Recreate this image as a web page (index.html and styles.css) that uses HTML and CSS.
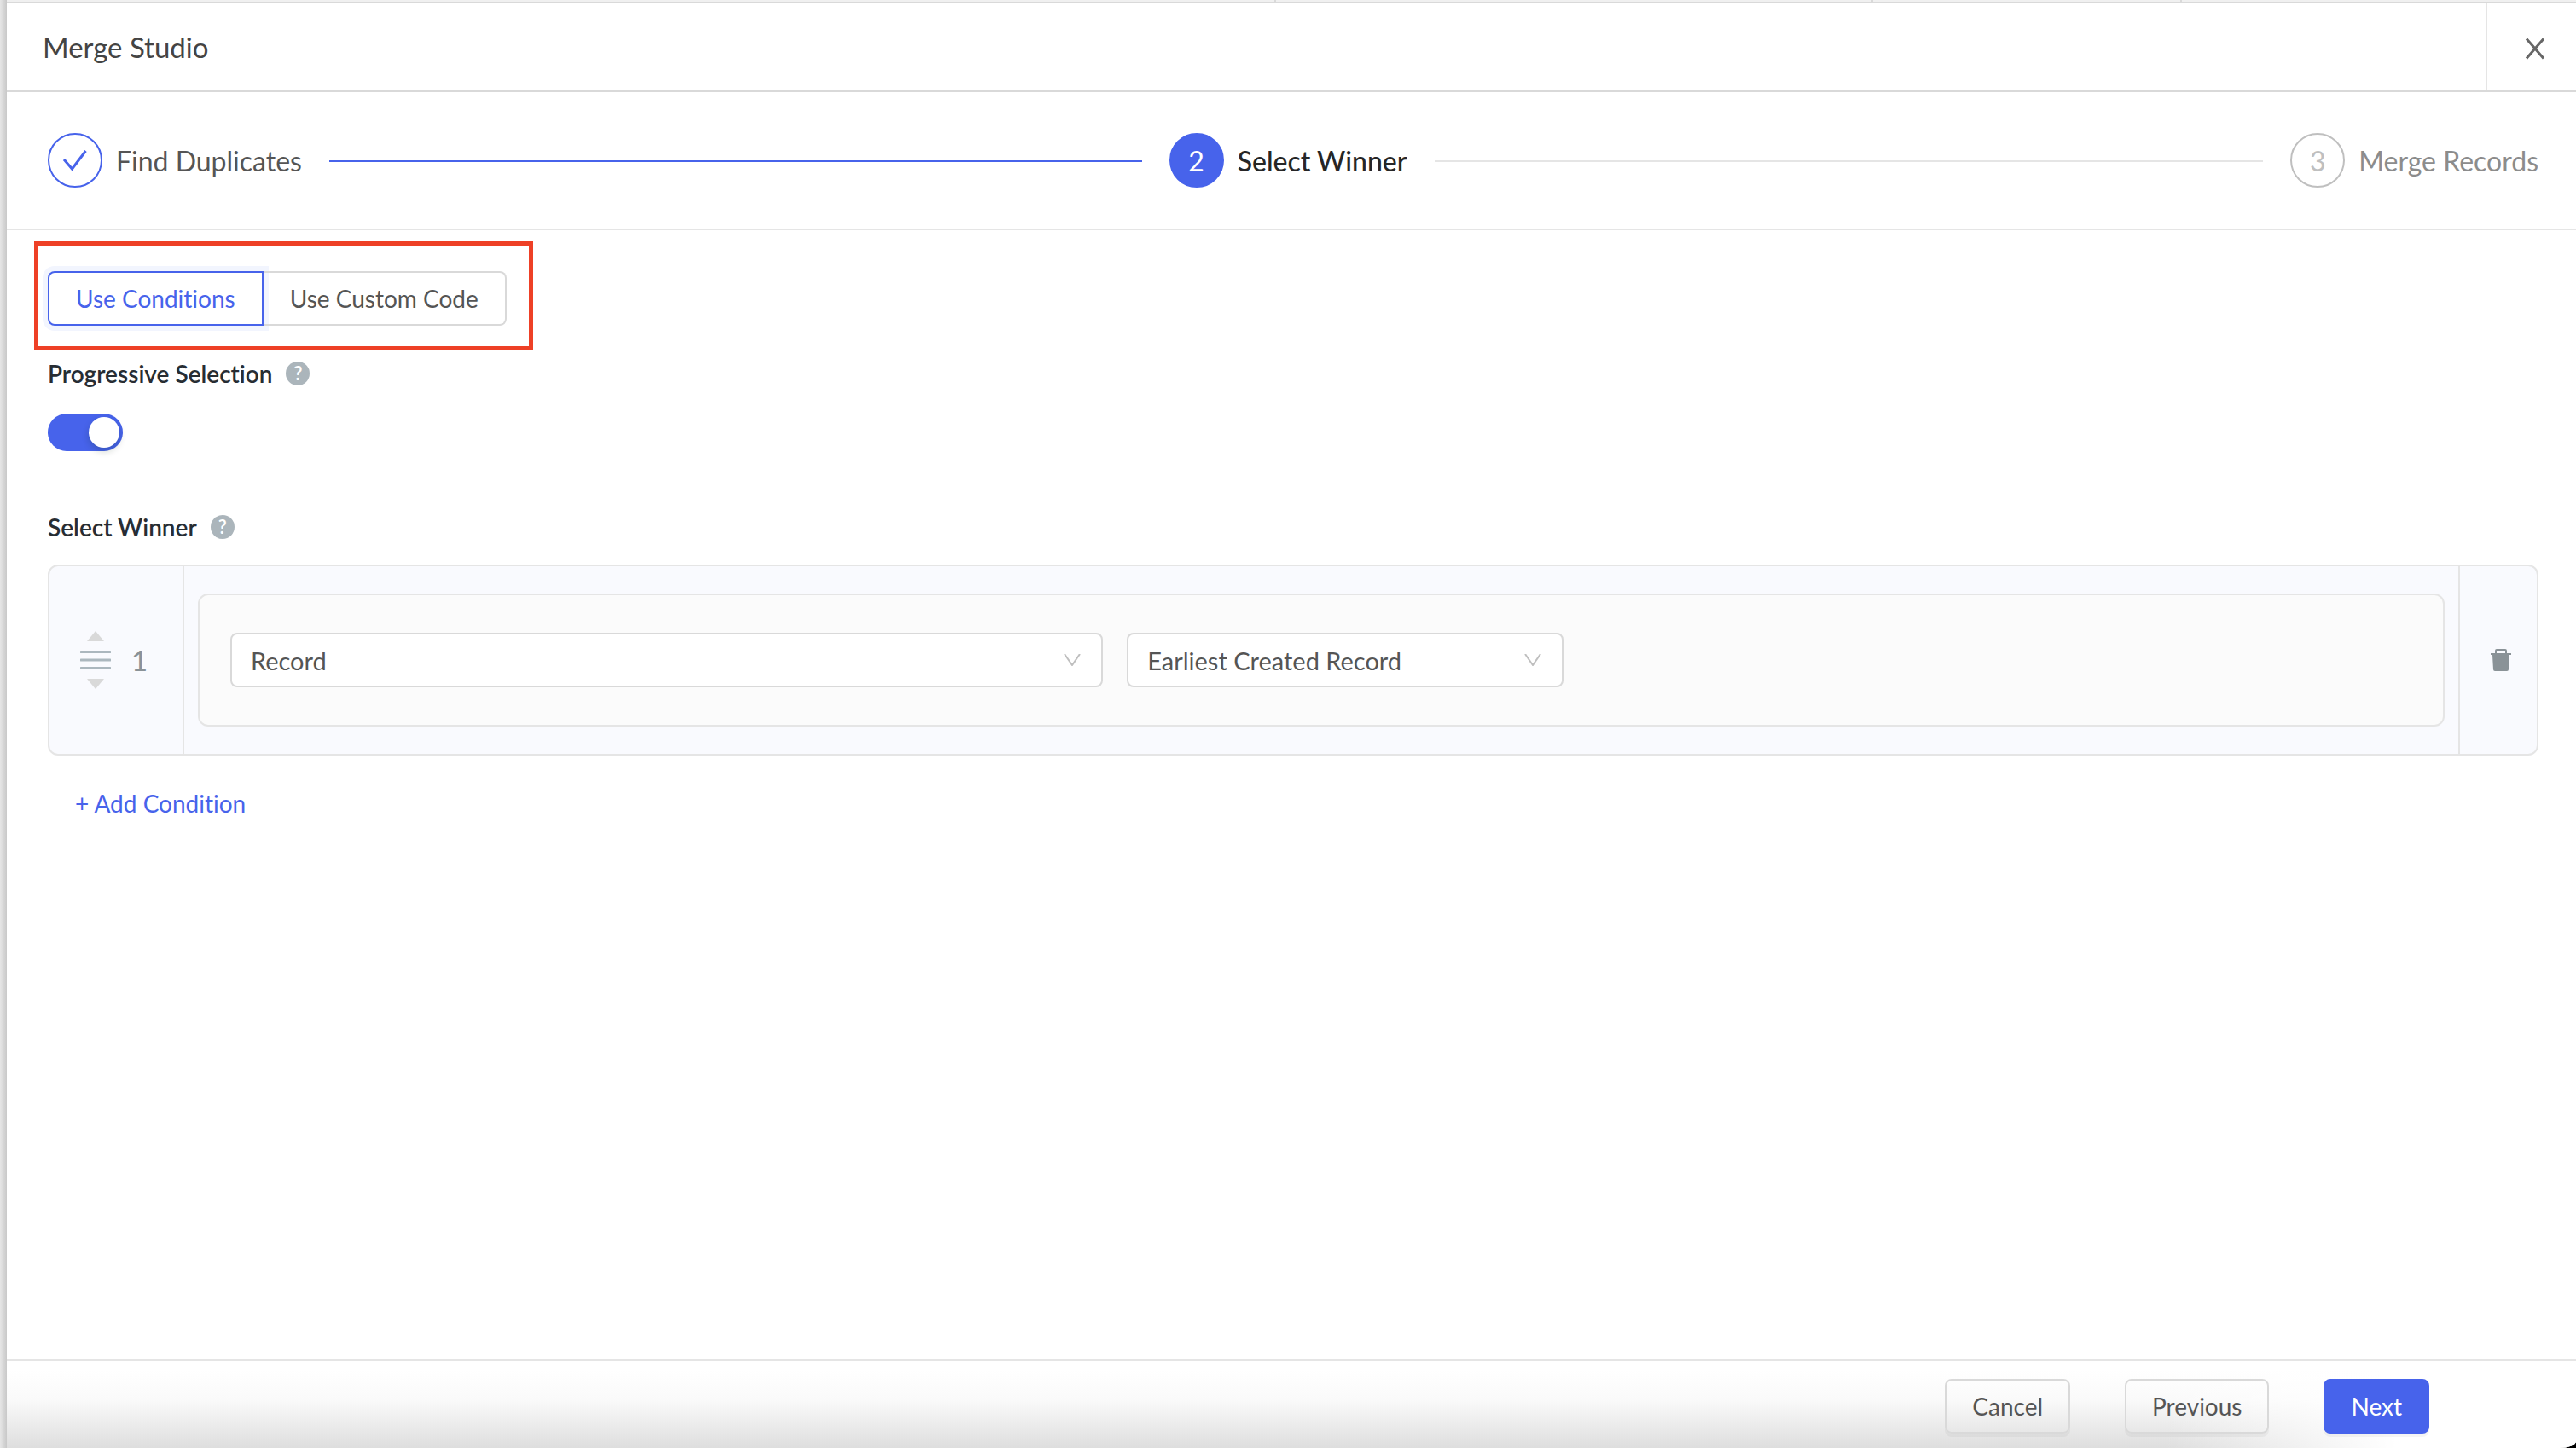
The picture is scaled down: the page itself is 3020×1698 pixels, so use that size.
FILE: index.html
```html
<!DOCTYPE html>
<html lang="en">

<head>
  <meta charset="UTF-8">
  <meta name="viewport" content="width=device-width, initial-scale=1.0">
  <title>Merge Studio</title>
  <link rel="stylesheet" href="styles.css">
</head>

<body>
  <div class="drawer">
    <header class="header">
      <h1 class="title">Merge Studio</h1>
      <button class="close" aria-label="Close">
        <svg width="24" height="26" viewBox="0 0 24 26"><path d="M2 1.500L22 24.500M22 1.500L2 24.500" /></svg>
      </button>
    </header>

    <ol class="steps">
      <li class="step done">
        <span class="step-icon">
          <svg width="30" height="26" viewBox="0 0 30 26"><path d="M2 12L11.500 23L27.500 2" /></svg>
        </span>
        <span class="step-label">Find Duplicates</span>
      </li>
      <li class="step active">
        <span class="step-icon">2</span>
        <span class="step-label">Select Winner</span>
      </li>
      <li class="step">
        <span class="step-icon">3</span>
        <span class="step-label">Merge Records</span>
      </li>
    </ol>

    <main class="content">
      <div class="highlight">
        <div class="button-group">
          <button class="btn selected">Use Conditions</button>
          <button class="btn">Use Custom Code</button>
        </div>
      </div>

      <div class="field-label">
        <label for="progressive">Progressive Selection</label>
        <span class="help">?</span>
      </div>
      <input type="checkbox" role="switch" id="progressive" class="switch" checked>

      <div class="field-label winner-label">
        <h2>Select Winner</h2>
        <span class="help">?</span>
      </div>

      <div class="condition">
        <div class="condition-order">
          <svg width="36" height="68" viewBox="0 0 36 68">
            <path class="arrow" d="M18 0L28 12H8zM18 68L28 56H8z" />
            <path class="bars" d="M1 24.500H35M1 34H35M1 43.500H35" />
          </svg>
          <span class="order">1</span>
        </div>
        <div class="condition-body">
          <div class="rule">
            <div class="select wide">
              <select aria-label="Winner type">
                <option>Record</option>
              </select>
              <svg width="20" height="14" viewBox="0 0 20 14"><path d="M1 0L10 13L19 0" /></svg>
            </div>
            <div class="select">
              <select aria-label="Rule">
                <option>Earliest Created Record</option>
              </select>
              <svg width="20" height="14" viewBox="0 0 20 14"><path d="M1 0L10 13L19 0" /></svg>
            </div>
          </div>
        </div>
        <button class="delete" aria-label="Delete condition">
          <svg width="24" height="26" viewBox="0 0 24 26">
            <path d="M7 0h10a2 2 0 0 1 2 2v3h5v2h-2l-1 17a2 2 0 0 1-2 2H5a2 2 0 0 1-2-2L2 7H0V5h5V2a2 2 0 0 1 2-2zM7 2v3h10V2z" fill-rule="evenodd" />
          </svg>
        </button>
      </div>

      <button class="add">+ Add Condition</button>
    </main>

    <footer class="footer">
      <button class="btn">Cancel</button>
      <button class="btn">Previous</button>
      <button class="btn primary">Next</button>
    </footer>
  </div>
</body>

</html>
```
FILE: styles.css
```css
* {
  box-sizing: border-box;
}

/* the page behind the drawer only shows at its edges */
body {
  margin: 0;
  min-height: 100vh;
  display: flex;
  padding: 2px 0 0 8px;
  background:
    linear-gradient(#000, #000) right bottom / 24px 24px no-repeat,
    linear-gradient(#d9d9d9, #d9d9d9) 49.5% 0 / 2px 2px no-repeat,
    linear-gradient(#d9d9d9, #d9d9d9) 72.7% 0 / 2px 2px no-repeat,
    linear-gradient(#d9d9d9, #d9d9d9) 84.7% 0 / 2px 2px no-repeat,
    linear-gradient(to right, #e6e6e6, #c8c8c8 8px, #f0f0f0 8px);
  font-family: "HK Grotesk", Lato, sans-serif;
  font-size: 28px;
  font-variant-ligatures: none;
  color: #555;
}

h1,
h2 {
  margin: 0;
  font: inherit;
  font-variant-ligatures: none;
}

button {
  padding: 0;
  border: 0;
  background: none;
  font: inherit;
  font-variant-ligatures: none;
  color: inherit;
  cursor: pointer;
}

svg {
  display: block;
  fill: none;
}

.drawer {
  flex: 1;
  display: flex;
  flex-direction: column;
  border-top: 2px solid #d9d9d9;
  border-bottom-right-radius: 20px 8px;
  background: #fff;
}

/* header */

.header {
  display: flex;
  height: 104px;
  border-bottom: 2px solid #d9d9d9;
}

.title {
  flex: 1;
  padding-left: 42px;
  font-size: 33px;
  line-height: 102px;
  color: #444;
}

.close {
  width: 106px;
  padding: 3px 0 0 44px;
  border-left: 2px solid #e5e5e5;
}

.close svg {
  stroke: #666;
  stroke-width: 3;
}

/* steps */

.steps {
  display: flex;
  margin: 0;
  padding: 48px 44px 48px 48px;
  border-bottom: 2px solid #e5e5e5;
  list-style: none;
  font-size: 32px;
}

.step {
  display: flex;
  align-items: center;
  color: #8c8c8c;
}

.step:not(:last-child) {
  flex: 1;
}

.step:not(:last-child)::after {
  content: "";
  flex: 1;
  height: 2px;
  margin: 2px 32px 0;
  background: #e5e5e5;
}

.step-icon {
  display: flex;
  align-items: center;
  justify-content: center;
  width: 64px;
  height: 64px;
  margin-right: 16px;
  border: 2px solid #bfbfbf;
  border-radius: 50%;
  color: #bfbfbf;
}

.step-icon svg {
  stroke: #4763eb;
  stroke-width: 3;
}

.step.done {
  color: #555;
}

.step.done .step-icon {
  border-color: #4763eb;
}

.step.done::after {
  background: #4763eb;
}

.step.active {
  font-weight: 500;
  color: #262626;
}

.step.active .step-icon {
  border-color: #4763eb;
  background: #4763eb;
  font-weight: 400;
  color: #fff;
}

/* content */

.content {
  flex: 1;
  padding: 13px 44px 0 48px;
}

.highlight {
  width: max-content;
  margin-left: -16px;
  padding: 30px 26px 24px 11px;
  border: 5px solid #ee4026;
}

.button-group {
  display: flex;
}

.btn {
  height: 64px;
  padding: 0 30px;
  border: 2px solid #d9d9d9;
  border-radius: 8px;
}

.button-group .btn {
  padding: 0 31px;
}

.button-group .btn:first-child {
  border-radius: 8px 0 0 8px;
}

.button-group .btn:last-child {
  border-left: 0;
  border-radius: 0 8px 8px 0;
}

.button-group .selected {
  border-color: #4763eb;
  box-shadow: 0 0 0 6px #f2f5fe;
  color: #4763eb;
}

.field-label {
  display: flex;
  align-items: center;
  gap: 16px;
  height: 40px;
  margin-top: 7px;
  font-weight: 600;
  color: #272d33;
}

.help {
  width: 28px;
  border-radius: 50%;
  background: #abb5bb;
  font-size: 22px;
  line-height: 28px;
  text-align: center;
  color: #fff;
}

.switch {
  appearance: none;
  display: flex;
  justify-content: flex-end;
  width: 88px;
  height: 44px;
  margin: 27px 0 0;
  padding: 4px;
  border-radius: 22px;
  background: #4763eb;
}

.switch::before {
  content: "";
  width: 36px;
  border-radius: 50%;
  background: #fff;
  box-shadow: 0 4px 8px rgba(0, 35, 11, 0.2);
}

.winner-label {
  margin-top: 69px;
}

/* condition card */

.condition {
  display: flex;
  margin-top: 24px;
  border: 2px solid #e5e5e5;
  border-radius: 12px;
  background: #f9fafe;
}

.condition-order {
  display: flex;
  align-items: center;
  gap: 24px;
  width: 158px;
  padding-left: 36px;
  border-right: 2px solid #e5e5e5;
  font-size: 33px;
  color: #8a9297;
}

.arrow {
  fill: #d9d9d9;
}

.bars {
  stroke: #abb7be;
  stroke-width: 3;
  stroke-linecap: round;
}

.condition-body {
  flex: 1;
  padding: 32px 16px;
}

.rule {
  display: flex;
  gap: 28px;
  padding: 44px 36px;
  border: 2px solid #e5e5e5;
  border-radius: 12px;
  background: #fbfbfb;
}

.select {
  display: grid;
  align-items: center;
  width: 20%;
}

.select.wide {
  width: 40%;
}

.select select,
.select svg {
  grid-area: 1 / 1;
}

.select select {
  appearance: none;
  width: 100%;
  height: 64px;
  padding: 0 22px;
  border: 2px solid #d9d9d9;
  border-radius: 8px;
  background: #fff;
  font: inherit;
  font-size: 29px;
  color: inherit;
}

.select svg {
  justify-self: end;
  margin-right: 26px;
  stroke: #bfbfbf;
  stroke-width: 2;
  pointer-events: none;
}

.delete {
  width: 92px;
  padding-left: 36px;
  border-left: 2px solid #e5e5e5;
}

.delete svg {
  fill: #8a9297;
}

.add {
  margin: 36px 0 0 32px;
  line-height: 40px;
  color: #4763eb;
}

/* footer */

.footer {
  display: flex;
  justify-content: flex-end;
  gap: 64px;
  height: 104px;
  padding: 21px 172px 0 0;
  border-top: 2px solid #e5e5e5;
  border-bottom-right-radius: 20px 8px;
  background: linear-gradient(to right, transparent 84%, #fff 93%), linear-gradient(#fff 10%, #fafafa 45%, #dedede);
}

.footer .btn {
  box-shadow: 0 4px 0 rgba(0, 0, 0, 0.04);
}

.footer .primary {
  border-color: #4763eb;
  background: #4763eb;
  color: #fff;
}
```
